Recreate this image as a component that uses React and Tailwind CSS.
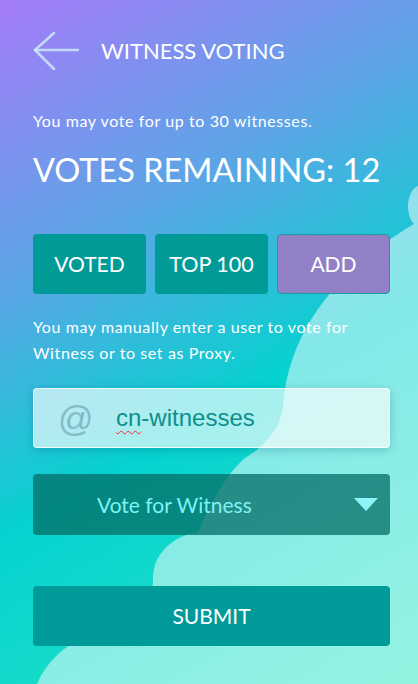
import React from 'react';

const Blob = () => (
    <svg className="absolute inset-0 h-full w-full" viewBox="0 0 418 684" preserveAspectRatio="none">
        <path
            d="M418,186 C410,189 406,203 409,214 C410,219 412,222 414,224 C350,262 290,320 283,405 C281,430 262,448 245,458 C225,475 210,505 198,532 C172,536 152,555 153,580 C154,600 130,625 75,642 C60,650 45,665 37,684 L418,684 Z"
            fill="rgba(255,255,255,0.5)"
        />
    </svg>
);

const BackArrow = () => (
    <svg width="46" height="38" viewBox="0 0 46 38" fill="none" stroke="rgba(205,232,252,0.85)" strokeWidth="2.6" strokeLinecap="round" strokeLinejoin="round">
        <path d="M2 18 H45" />
        <path d="M21 1 L2 18 L21 37" />
    </svg>
);

export default function App() {
    return (
        <div className="relative h-[684px] w-full overflow-hidden bg-[linear-gradient(150deg,#a57bfa_0%,#5aa6e5_32%,#06d2d0_58%,#2ae6c2_100%)] font-['Lato','Noto_Sans',sans-serif] text-white">
            <Blob />

            <div className="relative pl-[33px] pr-[28px] pt-[32px]">
                {/* header */}
                <header className="flex h-[38px] items-center">
                    <BackArrow />
                    <h1 className="ml-[22px] text-[22px] leading-none">WITNESS VOTING</h1>
                </header>

                <p className="mt-[41px] text-[16px] leading-[20px] tracking-[0.6px]">You may vote for up to 30 witnesses.</p>
                <h2 className="mt-[19px] whitespace-nowrap text-[32.5px] leading-[40px]">VOTES REMAINING: 12</h2>

                <div className="mt-[44px] grid h-[60px] grid-cols-3 gap-[9px]">
                    <button className="rounded-[4px] bg-[#009b97] text-[21px]">VOTED</button>
                    <button className="rounded-[4px] bg-[#009b97] text-[21.5px]">TOP 100</button>
                    <button className="rounded-[4px] border border-[#1a9c9c] bg-[#9180c6] text-[21px]">ADD</button>
                </div>

                <p className="mt-[20px] text-[16px] leading-[26px] tracking-[0.6px]">
                    You may manually enter a user to vote for<br />
                    Witness or to set as Proxy.
                </p>

                <div className="mt-[22px] flex h-[60px] items-center rounded-[4px] border border-white/80 bg-white/65 shadow-[0_2px_8px_rgba(0,70,110,0.25)]">
                    <span className="ml-[24px] w-[34px] font-['Liberation_Sans',sans-serif] text-[35px] leading-none text-[#86bac6]">@</span>
                    <span className="ml-[24px] font-['Liberation_Sans',sans-serif] text-[24px] text-[#0e8f8c]">
                        <span className="underline decoration-red-500 decoration-wavy decoration-1 underline-offset-4">cn</span>-witnesses
                    </span>
                </div>

                <div className="mt-[26px] flex h-[61px] items-center justify-between rounded-[4px] bg-[rgba(4,110,102,0.75)] pl-[64px] pr-[12px]">
                    <span className="text-[21px] text-[#7ef2f4]">Vote for Witness</span>
                    <svg width="24" height="13" viewBox="0 0 24 13">
                        <path d="M0 0 H24 L12 13 Z" fill="#8ff4f8" />
                    </svg>
                </div>

                <button className="mt-[51px] flex h-[60px] w-full items-center justify-center rounded-[4px] bg-[#009a98] text-[21px]">
                    SUBMIT
                </button>
            </div>
        </div>
    );
}
